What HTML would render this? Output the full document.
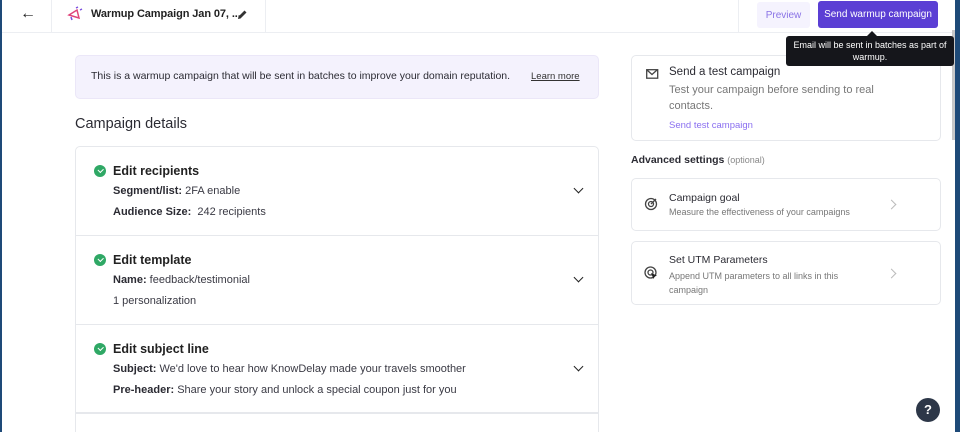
<!DOCTYPE html>
<html style="width:960px;height:432px;overflow:hidden"><head><style>
*{box-sizing:border-box;margin:0;padding:0}
body{width:960px;height:432px;overflow:hidden;background:#fff;font-family:"Liberation Sans",sans-serif;color:#2b2b33;position:relative}
.abs{position:absolute}
.top{left:0;top:0;width:960px;height:33px;border-bottom:1px solid #eceef2}
.vl{width:1px;background:#eceef2;top:0;height:32px}
.btn{border-radius:3px;font-size:10px;display:flex;align-items:center;justify-content:center;white-space:nowrap}
.card{border:1px solid #e6e8ec;border-radius:5px;background:#fff}
.sec{position:absolute;left:0;width:523px;border-top:1px solid #e6e8ec}
.chk{position:absolute;left:18px;width:12px;height:12px;border-radius:50%;background:#2fa865}
.chk:after{content:"";position:absolute;left:3.5px;top:3px;width:4px;height:2.5px;border-left:1.5px solid #fff;border-bottom:1.5px solid #fff;transform:rotate(-45deg)}
.st{position:absolute;left:37px;font-size:12.5px;font-weight:bold;color:#222}
.ln{position:absolute;left:37px;font-size:11px;color:#3a3a44}
.ln b{color:#2b2b33}
.chev{position:absolute;left:499px;width:7px;height:7px;border-right:1.8px solid #222;border-bottom:1.8px solid #222;transform:rotate(45deg)}
.rchev{position:absolute;left:256px;width:7px;height:7px;border-right:1.3px solid #bbb;border-top:1.3px solid #bbb;transform:rotate(45deg)}
</style></head><body>
<div class="abs top"></div>
<div class="abs vl" style="left:51px"></div>
<div class="abs vl" style="left:265px"></div>
<div class="abs vl" style="left:738px"></div>
<div class="abs" style="left:20px;top:5px;font-size:16px;color:#222">&#8592;</div>
<svg class="abs" style="left:66px;top:6px" width="18" height="16" viewBox="0 0 18 16"><path d="M3 9 L11 4 L13 12 Z" fill="none" stroke="#e0457b" stroke-width="1.5"/><path d="M10 2 L12 1 M14 4 L16 3" stroke="#7a4fe0" stroke-width="1.5"/><path d="M5 11 L6 14" stroke="#7a4fe0" stroke-width="1.5"/></svg>
<div class="abs" style="left:91px;top:8px;font-size:11px;font-weight:bold;color:#222;white-space:nowrap;letter-spacing:-0.1px">Warmup Campaign Jan 07, ...</div>
<svg class="abs" style="left:237px;top:9px" width="11" height="11" viewBox="0 0 11 11"><path d="M1 10 L1.5 7.5 L7.5 1.5 L9.5 3.5 L3.5 9.5 Z" fill="#333"/></svg>
<div class="abs btn" style="left:757px;top:2px;width:53px;height:26px;background:#f5f3fe;color:#8a73e6">Preview</div>
<div class="abs btn" style="left:818px;top:1px;width:120px;height:27px;background:#5b3fd4;color:#fff">Send warmup campaign</div>

<div class="abs" style="left:75px;top:55px;width:524px;height:44px;background:#f4f2fd;border:1px solid #ebe7f8;border-radius:5px"></div>
<div class="abs" style="left:91px;top:70px;font-size:10.5px;color:#2b2b33;white-space:nowrap">This is a warmup campaign that will be sent in batches to improve your domain reputation.</div>
<div class="abs" style="left:531px;top:71px;font-size:9.5px;color:#333;text-decoration:underline">Learn more</div>
<div class="abs" style="left:75px;top:116px;font-size:14.5px;color:#2b2b33">Campaign details</div>

<div class="abs card" style="left:75px;top:146px;width:524px;height:300px">
 <div class="chk" style="top:18px"></div><div class="st" style="top:17px">Edit recipients</div>
 <div class="ln" style="top:38px"><b>Segment/list:</b> 2FA enable</div>
 <div class="ln" style="top:59px"><b>Audience Size:</b>&nbsp; 242 recipients</div>
 <div class="chev" style="top:38px"></div>
 <div class="sec" style="top:88px"></div>
 <div class="chk" style="top:107px"></div><div class="st" style="top:106px">Edit template</div>
 <div class="ln" style="top:127px"><b>Name:</b> feedback/testimonial</div>
 <div class="ln" style="top:148px">1 personalization</div>
 <div class="chev" style="top:127px"></div>
 <div class="sec" style="top:177px"></div>
 <div class="chk" style="top:196px"></div><div class="st" style="top:195px">Edit subject line</div>
 <div class="ln" style="top:216px"><b>Subject:</b> We'd love to hear how KnowDelay made your travels smoother</div>
 <div class="ln" style="top:237px"><b>Pre-header:</b> Share your story and unlock a special coupon just for you</div>
 <div class="chev" style="top:216px"></div>
 <div class="sec" style="top:265px;border-top:2px solid #e6e8ec"></div>
</div>

<div class="abs card" style="left:631px;top:55px;width:310px;height:86px">
 <svg class="abs" style="left:14px;top:13px" width="13" height="11" viewBox="0 0 13 11"><rect x="0.7" y="0.7" width="11" height="8.5" fill="none" stroke="#444" stroke-width="1.3"/><path d="M1 1 L6 5.5 L11 1" fill="none" stroke="#444" stroke-width="1.3"/></svg>
 <div class="abs" style="left:37px;top:10px;font-size:11.5px;color:#2b2b33">Send a test campaign</div>
 <div class="abs" style="left:37px;top:26px;width:220px;font-size:11px;color:#777;line-height:16px">Test your campaign before sending to real contacts.</div>
 <div class="abs" style="left:37px;top:64px;font-size:9.5px;color:#8a6ff0">Send test campaign</div>
</div>
<div class="abs" style="left:786px;top:36px;width:168px;height:30px;background:#15161b;border-radius:3px;color:#fff;font-size:9px;text-align:center;line-height:12px;padding:3px 2px 0;z-index:5">Email will be sent in batches as part of<br>warmup.</div>
<div class="abs" style="left:867px;top:31px;width:0;height:0;border-left:5px solid transparent;border-right:5px solid transparent;border-bottom:5px solid #15161b;z-index:5"></div>
<div class="abs" style="left:631px;top:154px;font-size:10.5px;font-weight:bold;color:#2b2b33">Advanced settings <span style="font-weight:normal;font-size:9px;color:#888">(optional)</span></div>
<div class="abs card" style="left:631px;top:178px;width:310px;height:53px">
 <svg class="abs" style="left:12px;top:18px" width="14" height="14" viewBox="0 0 14 14"><circle cx="7" cy="7" r="5.5" fill="none" stroke="#444" stroke-width="1.3"/><circle cx="7" cy="7" r="2.5" fill="none" stroke="#444" stroke-width="1.3"/><path d="M7 7 L12 2" stroke="#444" stroke-width="1.3"/></svg>
 <div class="abs" style="left:37px;top:13px;font-size:10.5px;color:#2b2b33">Campaign goal</div>
 <div class="abs" style="left:37px;top:28px;font-size:9px;color:#777">Measure the effectiveness of your campaigns</div>
 <div class="rchev" style="top:22px"></div>
</div>
<div class="abs card" style="left:631px;top:241px;width:310px;height:64px">
 <svg class="abs" style="left:12px;top:24px" width="14" height="14" viewBox="0 0 14 14"><circle cx="6.5" cy="6.5" r="5.5" fill="none" stroke="#444" stroke-width="1.3"/><circle cx="6.5" cy="6.5" r="2.5" fill="none" stroke="#444" stroke-width="1.3"/><path d="M7 7 L13 9.5 L10.5 10.5 L9.5 13 Z" fill="#222"/></svg>
 <div class="abs" style="left:37px;top:12px;font-size:10.5px;color:#2b2b33">Set UTM Parameters</div>
 <div class="abs" style="left:37px;top:27px;width:200px;font-size:9px;color:#777;line-height:14px">Append UTM parameters to all links in this campaign</div>
 <div class="rchev" style="top:28px"></div>
</div>
<div class="abs" style="left:916px;top:398px;width:24px;height:24px;border-radius:50%;background:#2d3748;color:#fff;font-size:13px;font-weight:bold;text-align:center;line-height:24px">?</div>
<div class="abs" style="left:0;top:0;width:2px;height:432px;background:#1e4a78"></div>
<div class="abs" style="left:955px;top:0;width:5px;height:432px;background:#1e4a78"></div>
<div class="abs" style="left:952px;top:30px;width:3px;height:110px;background:#c8c8c8"></div>
</body></html>
